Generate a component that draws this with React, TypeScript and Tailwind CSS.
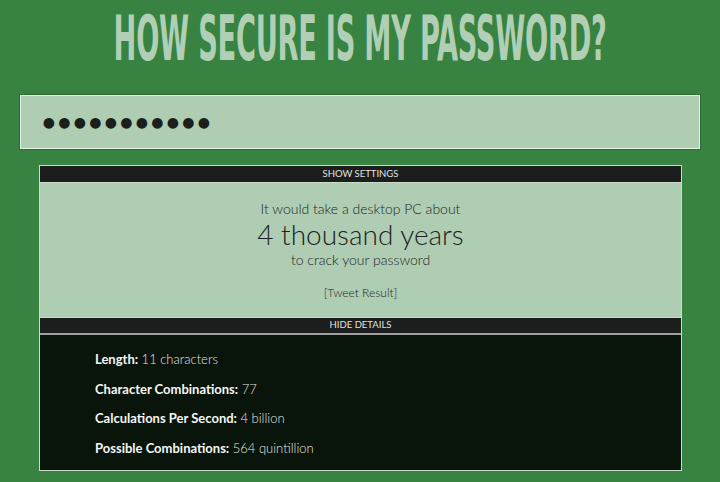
import React from "react";

const details: [string, string][] = [
  ["Length:", "11 characters"],
  ["Character Combinations:", "77"],
  ["Calculations Per Second:", "4 billion"],
  ["Possible Combinations:", "564 quintillion"],
];

export default function App() {
  return (
    <div
      className="w-[720px] h-[482px] bg-[#388341] overflow-hidden flex flex-col"
      style={{ fontFamily: "Lato, 'Noto Sans', sans-serif" }}
    >
      <div className="h-[72px] flex items-center justify-center">
        <h1
          className="inline-block scale-x-[0.505] scale-y-[1.04] text-[60px] leading-none font-bold text-[#b1cfb4] whitespace-nowrap tracking-[-0.5px] mt-[3px]"
          style={{ fontFamily: "'DejaVu Sans Condensed', 'DejaVu Sans', sans-serif" }}
        >
          HOW SECURE IS MY PASSWORD?
        </h1>
      </div>

      <div className="mt-[23px] ml-[20px] w-[680px] h-[54px] border border-[#e6efe6] outline outline-1 outline-[#2d6d35] bg-[#aecdb2] flex items-center pl-[20px]">
        {Array.from({ length: 11 }).map((_, i) => (
          <span
            key={i}
            className="w-[15.5px] flex justify-center text-[14px] leading-none text-[#1b1f1c]"
            style={{ fontFamily: "'DejaVu Sans', sans-serif" }}
          >
            ●
          </span>
        ))}
      </div>

      <div className="mt-[16px] ml-[39px] w-[643px] border border-[#c9dcc9] flex flex-col">
        <div className="h-[17px] bg-[#1b1e1c] border-b border-[#c9dcc9] flex items-center justify-center text-[9.5px] text-[#e2e4e2] uppercase">
          Show Settings
        </div>
        <div className="h-[134px] bg-[#aecdb2] flex flex-col items-center text-[#1e231f] font-light">
          <div className="mt-[18px] text-[14px] leading-[16px]">It would take a desktop PC about</div>
          <div className="mt-[1px] text-[28px] leading-[32px]">4 thousand years</div>
          <div className="text-[14px] leading-[17px] mt-[1px]">to crack your password</div>
          <div className="mt-[18px] text-[12px] leading-[14px] font-light">[Tweet Result]</div>
        </div>
        <div className="h-[18px] bg-[#1b1e1c] border-t border-[#c9dcc9] border-b-2 border-b-[#9d9f9d] flex items-center justify-center text-[9.5px] text-[#e2e4e2] uppercase">
          Hide Details
        </div>
        <div className="h-[135px] bg-[#09140b] flex flex-col pl-[55px] pt-[16px] gap-[12px]">
          {details.map(([k, v]) => (
            <div key={k} className="text-[13px] leading-[17.5px] text-[#e2e5e2] font-light">
              <span className="font-bold text-[#f4f6f4]">{k}</span> {v}
            </div>
          ))}
        </div>
      </div>
    </div>
  );
}
